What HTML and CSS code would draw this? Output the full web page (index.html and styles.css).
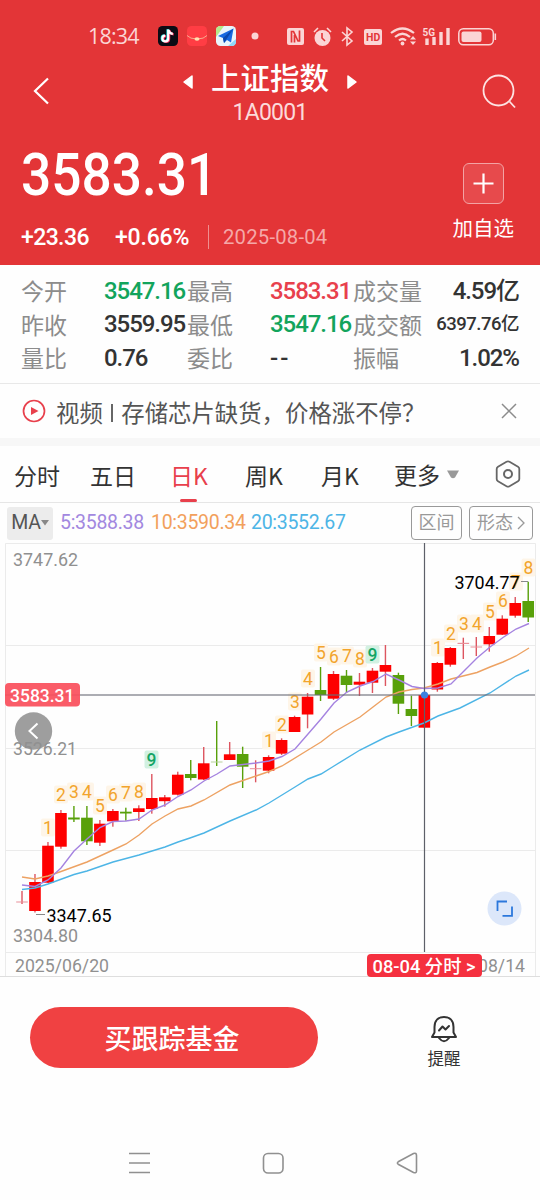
FILE: index.html
```html
<!DOCTYPE html>
<html lang="zh-CN">
<head>
  <meta charset="utf-8">
  <title>上证指数 1A0001</title>
  <link rel="stylesheet" href="styles.css">
</head>
<body>
  <!-- Red header -->
  <header class="header">
    <div class="status-bar">
      <span class="time">18:34</span>
      <svg class="app-icons" width="110" height="22" viewBox="0 0 110 22">
        <rect x="0" y="1" width="20" height="20" rx="4.5" fill="#0b0b14"/>
        <g fill="none" stroke-width="2.2">
          <path d="M10.2 4.5v9a2.9 2.9 0 1 1-3-2.9M10.5 5c.4 2.3 2 3.6 4.3 3.8" stroke="#25e5e5" transform="translate(-.7 -.3)"/>
          <path d="M10.2 4.5v9a2.9 2.9 0 1 1-3-2.9M10.5 5c.4 2.3 2 3.6 4.3 3.8" stroke="#fb3260" transform="translate(.9 .5)"/>
          <path d="M10.2 4.5v9a2.9 2.9 0 1 1-3-2.9M10.5 5c.4 2.3 2 3.6 4.3 3.8" stroke="#fff"/>
        </g>
        <rect x="29" y="1" width="20" height="20" rx="4.5" fill="#ff3d44"/>
        <path d="M29 10.5q3 3.5 10 3.5t10-3.5" fill="none" stroke="#f6a98d" stroke-width="1"/>
        <ellipse cx="39" cy="14" rx="2.5" ry="1.8" fill="#ffe0b0"/>
        <rect x="58" y="1" width="20" height="20" rx="4.5" fill="#e9f5fb"/>
        <path d="M58 12V5.5Q58 1 62.5 1H66z" fill="#b6e88a"/>
        <path d="M70 21l8-7v2.5q0 4.500-4.500 4.500z" fill="#8fd8f7"/>
        <path d="M75.5 3.500L60 11l5 2 1 5 3-3 4 2.500z" fill="#1769e0"/>
        <path d="M75.5 3.500L65 13l1 5z" fill="#0b49ad"/>
        <circle cx="97" cy="11" r="3.5" fill="#fbd5d5"/>
      </svg>
      <svg class="sys-icons" width="214" height="24" viewBox="0 0 214 24" fill="none" stroke="#fbd5d5">
        <rect x="1" y="4" width="17" height="17" rx="2" fill="#fbd5d5" stroke="none"/>
        <path d="M5.5 18.500V7.500h2l4.500 9.500h1.500V6.500M8.500 11v7.500" stroke="#e33537" stroke-width="1.7"/>
        <circle cx="36.5" cy="14" r="8" fill="#fbd5d5" stroke="none"/>
        <path d="M28 8l4-4M41 4l4 4" stroke-width="1.6"/>
        <path d="M36 9v5l3 3" stroke="#e33537" stroke-width="1.6"/>
        <path d="M56 8l10 9-5 4V4l5 4-10 9" stroke-width="1.6"/>
        <rect x="78" y="5" width="18" height="16" rx="2" fill="#fbd5d5" stroke="none"/>
        <text x="80" y="17" class="hd">HD</text>
        <path d="M105 9q11.500-9 23 0M109 13q7.500-6.500 15 0M113 16.500q3.500-3 7 0" stroke-width="2.2"/>
        <circle cx="116.5" cy="19.5" r="1.9" fill="#fbd5d5" stroke="none"/>
        <path d="M124 15.500l3-3.500 3 3.500zM124 17.500l3 3.500 3-3.500z" fill="#fbd5d5" stroke="none"/>
        <text x="136.500" y="11.500" class="net">5G</text>
        <path d="M141 14.500V21M148 13V21M155 8V21M162 4V21" stroke-width="3.4"/>
        <rect x="172.8" y="4.8" width="34.5" height="16" rx="4.5" stroke-width="1.5"/>
        <rect x="175.5" y="7.5" width="20" height="10.6" rx="2" fill="#fbd5d5" stroke="none"/>
        <path d="M209.300 9.500v6.500" stroke-width="1.6"/>
      </svg>
    </div>

    <div class="title-bar">
      <svg class="back" width="20" height="30" viewBox="0 0 20 30"><path d="M16 2.500L3 15l13 12.500" fill="none" stroke="#fff" stroke-width="2.2"/></svg>
      <div class="title">
        <div class="title-name">
          <svg width="12" height="16" viewBox="0 0 12 16"><path d="M10 2L2 8l8 6z" fill="#fff" stroke="#fff" stroke-width="1.5" stroke-linejoin="round"/></svg>
          <h1>上证指数</h1>
          <svg width="12" height="16" viewBox="0 0 12 16"><path d="M2 2l8 6-8 6z" fill="#fff" stroke="#fff" stroke-width="1.5" stroke-linejoin="round"/></svg>
        </div>
        <div class="code">1A0001</div>
      </div>
      <svg class="search" width="36" height="36" viewBox="0 0 36 36" fill="none" stroke="#fde3e3" stroke-width="1.8"><circle cx="16.5" cy="16.5" r="15"/><path d="M27.500 27.500l5.500 6"/></svg>
    </div>

    <div class="quote">
      <div>
        <div class="price">3583.31</div>
        <div class="change">
          <span class="diff">+23.36</span>
          <span class="pct">+0.66%</span>
          <span class="date">2025-08-04</span>
        </div>
      </div>
      <div class="add">
        <div class="add-box">
          <svg width="21" height="21" viewBox="0 0 21 21"><path d="M10.500 .5v20M.5 10.500h20" stroke="#fff" stroke-width="2.2"/></svg>
        </div>
        <span>加自选</span>
      </div>
    </div>
  </header>

  <!-- Key figures -->
  <section class="stats">
    <span>今开</span><b class="green">3547.16</b><span>最高</span><b class="red">3583.31</b><span>成交量</span><b class="last">4.59亿</b>
    <span>昨收</span><b>3559.95</b><span>最低</span><b class="green">3547.16</b><span>成交额</span><b class="last small">6397.76亿</b>
    <span>量比</span><b>0.76</b><span>委比</span><b class="dash">--</b><span>振幅</span><b class="last">1.02%</b>
  </section>

  <!-- News strip -->
  <section class="news">
    <svg width="24" height="24" viewBox="0 0 24 24"><circle cx="12" cy="12" r="10.5" fill="none" stroke="#e8404c" stroke-width="1.7"/><path d="M9 8l7.500 4L9 16z" fill="#e8404c"/></svg>
    <span class="news-text">视频 <i></i> 存储芯片缺货，价格涨不停？</span>
    <svg class="close" width="16" height="16" viewBox="0 0 16 16"><path d="M1 1l14 14M15 1L1 15" stroke="#8c8c8c" stroke-width="1.5"/></svg>
  </section>

  <!-- Period tabs -->
  <nav class="tabs">
    <a>分时</a>
    <a>五日</a>
    <a class="active">日K</a>
    <a>周K</a>
    <a>月K</a>
    <a class="more">更多 <svg width="12" height="9" viewBox="0 0 12 9"><path d="M0 .5h12L8 7.500q-2 1.500-4 0z" fill="#999"/></svg></a>
    <svg class="setting" width="26" height="28" viewBox="0 0 26 28" fill="none" stroke="#666"><path d="M11.500 1.800q1.500-.8 3 0l8.500 5q1.300.8 1.300 2.200v10q0 1.400-1.300 2.200l-8.500 5q-1.500.8-3 0L3 21.200Q1.700 20.400 1.700 19V9Q1.700 7.600 3 6.800z" stroke-width="1.8"/><circle cx="13" cy="14" r="4" stroke-width="2"/></svg>
  </nav>

  <!-- Indicator row -->
  <div class="indicators">
    <span class="ma-select">MA<svg width="8" height="6" viewBox="0 0 8 6"><path d="M0 0h8L4 5.500z" fill="#888"/></svg></span>
    <span class="ma5">5:3588.38</span>
    <span class="ma10">10:3590.34</span>
    <span class="ma20">20:3552.67</span>
    <span class="btn range">区间</span>
    <span class="btn shape">形态<svg width="8" height="14" viewBox="0 0 8 14"><path d="M1 1l6 6-6 6" fill="none" stroke="#999" stroke-width="1.3"/></svg></span>
  </div>

  <!-- K-line chart -->
  <svg class="chart" id="chart" width="540" height="437" viewBox="0 540 540 437">
    <path class="grid" d="M5.500 976V543.500H535.500V976M5.500 645.500h530M5.500 748.500h530M5.500 850.500h530M5.500 952.500h530"/>
    <path class="grid bottom" d="M0 976.500h540"/>
    <g id="signals"></g>
    <g id="candles"></g>
    <g id="lines"></g>
    <path d="M5 695H535" stroke="#6b6e78" stroke-opacity=".75" stroke-width="1.4"/>
    <path d="M424.500 543V952" stroke="#5d6069" stroke-width="1.2"/>
    <circle cx="424.5" cy="695" r="3.6" fill="#3c82e0"/>

    <circle cx="33.5" cy="731" r="18.7" fill="#9e9e9e"/>
    <path d="M37.500 723.500l-8 7.500 8 7.500" fill="none" stroke="#fff" stroke-width="2"/>

    <text class="axis" x="13" y="566" textLength="65" lengthAdjust="spacingAndGlyphs">3747.62</text>
    <text class="axis" x="13" y="755" textLength="64" lengthAdjust="spacingAndGlyphs">3526.21</text>
    <text class="axis" x="13" y="942" textLength="65" lengthAdjust="spacingAndGlyphs">3304.80</text>
    <text class="axis" x="15" y="972" textLength="94" lengthAdjust="spacingAndGlyphs">2025/06/20</text>
    <text class="axis" x="478" y="972" textLength="47" lengthAdjust="spacingAndGlyphs">08/14</text>

    <path d="M36 914.500h9M521 581.500h7" stroke="#888"/>
    <text class="mark" x="46.5" y="922" textLength="65" lengthAdjust="spacingAndGlyphs">3347.65</text>
    <text class="mark" x="454.5" y="589" textLength="65" lengthAdjust="spacingAndGlyphs">3704.77</text>

    <rect x="5" y="683" width="75" height="23.5" rx="4" fill="#fa505c" fill-opacity=".93"/>
    <text class="tag" x="10" y="701.5" textLength="64.5" lengthAdjust="spacingAndGlyphs">3583.31</text>

    <rect x="367" y="954" width="115" height="23" rx="4" fill="#f5303f"/>
    <text class="tag" x="372.5" y="972.5" textLength="103" lengthAdjust="spacingAndGlyphs">08-04 分时 &gt;</text>

    <circle cx="504.5" cy="908.5" r="17" fill="#dce7fa"/>
    <path d="M497.500 911v-9.500h9.500M512 906.500v9.300h-9.500" fill="none" stroke="#2c78dc" stroke-width="1.8"/>
  </svg>

  <!-- Bottom actions -->
  <footer class="actions">
    <button class="buy">买跟踪基金</button>
    <div class="remind">
      <svg width="28" height="28" viewBox="0 0 28 28" fill="none" stroke="#333" stroke-width="2" stroke-linejoin="round" stroke-linecap="round"><path d="M4.500 17.500v-5.500C4.500 5.500 8.500 2 14 2s9.500 3.500 9.500 10v5.500L26 22H2zM9 23q5 6.500 10 0"/><path d="M9 15.500l3.500-4 3 3 3.500-3.500"/></svg>
      <span>提醒</span>
    </div>
  </footer>

  <!-- System navigation -->
  <div class="sys-nav">
    <svg width="22" height="22" viewBox="0 0 22 22"><path d="M1 1.500h21M1 11h21M1 20.500h21"/></svg>
    <svg width="22" height="22" viewBox="0 0 22 22"><rect x="1.5" y="1.5" width="19.5" height="19.5" rx="4.5"/></svg>
    <svg width="22" height="22" viewBox="0 0 22 22"><path d="M2.200 9.800L17.500 1.500Q20.500.5 20.500 3.500v15.500q0 2.500-3 1.500L2.200 12.200q-1.600-1.200 0-2.400z"/></svg>
  </div>

  <script src="chart.js"></script>
</body>
</html>
```
FILE: styles.css
```css
* {
  box-sizing: border-box;
}

body {
  margin: 0;
  width: 540px;
  height: 1200px;
  overflow: hidden;
  background: #fefefe;
  color: #333;
  font-family: "Noto Sans CJK SC", sans-serif;
  line-height: 1;
}

svg {
  display: block;
  flex: none;
}

/* Numbers */
.code, .price, .change, .stats b, .indicators, .chart text {
  font-family: Roboto, "Noto Sans CJK SC", sans-serif;
}

/* Header */
.header {
  height: 265px;
  background: #e33537;
  color: #fff;
}

.status-bar {
  display: flex;
  align-items: center;
  height: 56px;
  padding: 16px 0 0 88px;
}

.time {
  width: 70px;
  font: 21.5px/1 "Open Sans", sans-serif;
  letter-spacing: -0.8px;
  color: #fbd5d5;
}

.sys-icons {
  margin-left: 18px;
}

.hd {
  font: bold 10.5px Roboto, sans-serif;
  fill: #e33537;
  stroke: none;
}

.net {
  font: bold 10px Roboto, sans-serif;
  fill: #fbd5d5;
  stroke: none;
}

.title-bar {
  display: flex;
  justify-content: space-between;
  height: 74px;
  padding: 6px 22px 0 32px;
}

.back {
  margin-top: 14px;
}

.search {
  margin-top: 12px;
}

.title {
  margin-left: 6px;
  text-align: center;
}

.title-name {
  display: flex;
  align-items: center;
  gap: 17px;
  margin-top: -1px;
}

.title-name svg {
  margin-top: 10px;
}

h1 {
  margin: 0;
  font-size: 29.5px;
  font-weight: 500;
  line-height: 31px;
}

.code {
  margin-top: 9px;
  font-size: 23px;
  letter-spacing: -0.8px;
  color: #fcdada;
}

.quote {
  display: flex;
  justify-content: space-between;
  padding: 15px 26px 0 21px;
}

.price {
  width: 214px;
  font-size: 58.5px;
  font-weight: 500;
  line-height: 60px;
  transform: scaleX(0.91);
  transform-origin: left;
}

.change {
  display: flex;
  align-items: center;
  height: 24px;
  margin-top: 20px;
  font-size: 23px;
  font-weight: 500;
  letter-spacing: -0.6px;
}

.diff {
  width: 94px;
}

.pct {
  width: 93px;
  letter-spacing: -0.2px;
}

.date {
  padding: 2px 0 2px 14px;
  border-left: 1px solid #ef8f90;
  font-size: 20.3px;
  font-weight: 400;
  letter-spacing: 0.2px;
  color: #f5a8a8;
}

.add {
  display: flex;
  flex-direction: column;
  align-items: center;
  padding-top: 18px;
  font-size: 20.5px;
}

.add-box {
  display: flex;
  align-items: center;
  justify-content: center;
  width: 41px;
  height: 41px;
  margin-bottom: 13px;
  border: 1px solid #f3a3a4;
  border-radius: 6px;
  background: #e74a4c;
}

/* Key figures */
.stats {
  display: grid;
  grid-template-columns: 83px 83px 83px 83px 84px 82px;
  grid-auto-rows: 33.5px;
  align-items: center;
  height: 119px;
  padding: 9px 21px 0;
  border-bottom: 1px solid #e8e8e8;
  font-size: 23px;
  white-space: nowrap;
}

.stats span {
  color: #8c8c8c;
}

.stats b {
  font-size: 24px;
  font-weight: 500;
  letter-spacing: -1.05px;
}

.stats .green {
  color: #12a45c;
}

.stats .red {
  color: #e8404c;
}

.stats .dash {
  letter-spacing: 2px;
}

.stats .last {
  justify-self: end;
}

.stats .small {
  font-size: 18.5px;
  letter-spacing: -0.5px;
}

/* News strip */
.news {
  display: flex;
  align-items: center;
  height: 62px;
  padding: 0 23px 0 22px;
  border-bottom: 8px solid #f7f7f7;
}

.news-text {
  margin-left: 10px;
  padding-top: 3px;
  font-size: 23.4px;
  color: #555;
  white-space: nowrap;
}

.news-text i {
  display: inline-block;
  width: 2px;
  height: 18px;
  margin: 0 3px;
  background: #666;
}

.close {
  margin-left: auto;
}

/* Tabs */
.tabs {
  display: flex;
  height: 57px;
  padding: 0 19px 0 14px;
  border-bottom: 1px solid #e6e6e6;
  font-size: 23px;
  line-height: 59px;
}

.tabs a {
  position: relative;
  width: 76px;
  white-space: nowrap;
}

.tabs a:nth-child(2) {
  width: 80px;
}

.tabs a:nth-child(3) {
  width: 75px;
}

.tabs a:nth-child(5) {
  width: 73px;
}

.tabs .active {
  color: #e8404c;
}

.active::after {
  content: "";
  position: absolute;
  left: 10px;
  bottom: 0;
  width: 17px;
  height: 3px;
  border-radius: 2px;
  background: #e8404c;
}

.tabs .more {
  display: flex;
  align-items: center;
  gap: 7px;
}

.setting {
  margin: 14px 0 0 auto;
}

/* Indicator row */
.indicators {
  display: flex;
  align-items: center;
  height: 40px;
  padding: 0 7px;
  font-size: 19.5px;
  letter-spacing: -0.3px;
  white-space: nowrap;
}

.ma-select {
  display: flex;
  align-items: center;
  justify-content: center;
  width: 46px;
  height: 33px;
  margin-right: 7px;
  border-radius: 3px;
  background: #ececec;
  color: #555;
}

.ma5 {
  width: 91px;
  color: #a288e0;
}

.ma10 {
  width: 100px;
  color: #f2a05c;
}

.ma20 {
  color: #4db5e6;
}

.btn {
  display: flex;
  align-items: center;
  justify-content: center;
  height: 34px;
  border: 1px solid #999;
  border-radius: 4px;
  font-size: 18px;
  letter-spacing: 0;
  color: #999;
}

.range {
  width: 51px;
  margin-left: auto;
}

.shape {
  width: 64px;
  gap: 4px;
  margin-left: 7px;
}

/* Chart */
.chart {
  margin-top: -3px;
}

.grid {
  fill: none;
  stroke: #ebebeb;
}

.bottom {
  stroke: #dedede;
}

.chart text {
  font-size: 18.5px;
}

.chart .axis {
  fill: #909090;
}

.chart .mark {
  fill: #000;
}

.chart .tag {
  fill: #fff;
  font-weight: 500;
}

.chart .signal {
  fill: #f2a42c;
  font-size: 17.5px;
  text-anchor: middle;
}

.chart .nine {
  fill: #14a566;
  font-weight: 500;
}

/* Bottom actions */
.actions {
  display: flex;
  align-items: flex-start;
  height: 146px;
  padding: 30px 0 0 30px;
}

.buy {
  width: 288px;
  height: 61px;
  padding: 0 4px 0 0;
  border: 0;
  border-radius: 31px;
  background: #f04142;
  color: #fff;
  font-family: inherit;
  font-size: 27px;
  font-weight: 500;
}

.remind {
  display: flex;
  flex-direction: column;
  align-items: center;
  gap: 7px;
  width: 60px;
  margin: 8px 0 0 96px;
  font-size: 16.5px;
}

/* System navigation */
.sys-nav {
  display: flex;
  gap: 112px;
  padding: 29px 0 0 128px;
  fill: none;
  stroke: #909090;
  stroke-width: 1.6;
}
```
FILE: chart.js
```js
const NS = 'http://www.w3.org/2000/svg';
const STEP = 12.98;
const RED = '#fe0000';
const GREEN = '#58a00a';

// high, low, body top, body bottom, kind (r = up, g = down, c = faint red cross, p = pale green cross)
const candles = [
  [891, 904, 901.5, 902.5, 'c'], [874, 912.5, 882, 911, 'r'], [842, 883, 845.7, 882.7, 'r'],
  [810, 848.7, 813, 846.7, 'r'], [806, 822, 817.5, 819.5, 'g'], [806, 845, 817.7, 841.3, 'g'],
  [820, 846, 823.7, 842.7, 'r'], [809, 826.7, 811, 821.3, 'r'], [807.7, 820.7, 811.7, 813.5, 'g'],
  [805.3, 821, 808.3, 812, 'r'], [774, 813.7, 798, 809, 'r'], [795, 806.7, 797.3, 801.2, 'r'],
  [771.7, 795.5, 774.7, 794.7, 'r'], [760, 780.3, 774, 778, 'g'], [747, 780, 763.3, 779.5, 'r'],
  [721, 766, 761.5, 762.5, 'p'], [742, 760, 754.3, 760, 'r'], [746.7, 788, 754, 766.7, 'g'],
  [760.3, 782.3, 768.2, 769.2, 'c'], [755.3, 773.3, 757, 770.7, 'r'], [738.3, 755, 740, 753.7, 'r'],
  [715.7, 732, 717, 732, 'r'], [693, 728.3, 696.7, 714.5, 'r'], [667, 701, 690, 695, 'g'],
  [671, 700, 674, 698.7, 'r'], [670, 693, 675.7, 685, 'g'], [673, 696, 681.7, 684.7, 'r'],
  [668, 693, 670.7, 682.7, 'r'], [645, 686, 665, 671.7, 'r'], [672.7, 714, 675, 703.7, 'g'],
  [695.7, 726, 709, 716, 'g'], [693, 728, 695, 727.7, 'r'], [662, 691.7, 663, 689.5, 'r'],
  [647, 666.7, 648, 664.7, 'r'], [637.7, 659, 642.8, 644, 'c'], [637, 656, 646.5, 647.5, 'c'],
  [627, 651.7, 636, 644.3, 'r'], [615.3, 635, 618.7, 634.7, 'r'], [597, 617.7, 603, 615.7, 'r'],
  [581.7, 622, 601, 617.5, 'g']
];

const signals = [
  [48, 828, 1], [61, 795, 2], [74, 792, 3], [87, 792, 4], [100, 806, 5], [113, 795, 6], [126, 793, 7], [139, 792, 8], [151.5, 760, 9],
  [269, 741, 1], [282, 725, 2], [295, 702, 3], [308, 679, 4], [321, 653, 5], [334, 657, 6], [347, 656, 7], [360, 659, 8], [372.5, 655, 9],
  [438, 648, 1], [451, 634, 2], [464, 624, 3], [477, 624, 4], [490, 612, 5], [503, 601, 6], [516, 582, 7], [528.5, 568, 8]
];

const lines = {
  '#4db5e6': '22,889.5 35,888 48,884 74,874.5 87,871 113,862 139,855 165,847 178,842 190,838 204,833 230,821 256,810 269,803 295,787 308,779 321,774 334,766 360,750 386,737 399,732 424,723 438,716 460,708 490,693 516,676 529,670',
  '#eda263': '22,877 35,879 48,876 61,871.5 87,862 113,850 126,844 139,835 152,824 165,816 178,809 191,806 204,800 230,785 256,776 269,771.5 282,766 308,750 321,742 334,732 360,717 373,707 386,697 399,692 412,689.5 424,688 438,684 451,679 477,672.5 490,667 503,662 516,656 529,648',
  '#a583e0': '22,885 35,886.5 48,880 61,868 74,851 87,839 100,827.5 113,821.5 126,821 139,819 152,810 165,805 178,796.5 191,790 204,781 217,774 230,766 243,764.5 256,763 269,761 282,756.5 295,749 308,734 321,719 334,703 347,692 360,686 373,681.5 386,674 399,680 412,686.5 424,688.5 438,688 451,684 464,671 477,658 490,647 503,637.5 516,629 529,623.5'
};

function add(parent, tag, attrs, text) {
  const el = document.createElementNS(NS, tag);
  for (const key in attrs) el.setAttribute(key, attrs[key]);
  if (text !== undefined) el.textContent = text;
  document.getElementById(parent).appendChild(el);
}

candles.forEach(([high, low, top, bottom, kind], i) => {
  const x = 22 + i * STEP;
  const up = kind === 'r' || kind === 'c';
  add('candles', 'rect', {
    x: x - 0.7, y: high, width: 1.4, height: low - high,
    fill: up ? '#dd5560' : GREEN
  });
  const fill = { r: RED, g: GREEN, c: '#e8909a', p: '#b5d09a' }[kind];
  add('candles', 'rect', { x: x - 5.8, y: top, width: 11.6, height: bottom - top, fill });
});

signals.forEach(([x, y, n]) => {
  const nine = n === 9;
  add('signals', 'rect', {
    x: x - 7, y: y - 9.5, width: 14, height: 18, rx: 2,
    fill: nine ? '#d2f1e2' : '#fef5e8'
  });
  add('signals', 'text', { x, y: y + 6.3, class: nine ? 'signal nine' : 'signal' }, n);
});

for (const color in lines) {
  add('lines', 'polyline', { points: lines[color], fill: 'none', stroke: color, 'stroke-width': 1.4 });
}
```
